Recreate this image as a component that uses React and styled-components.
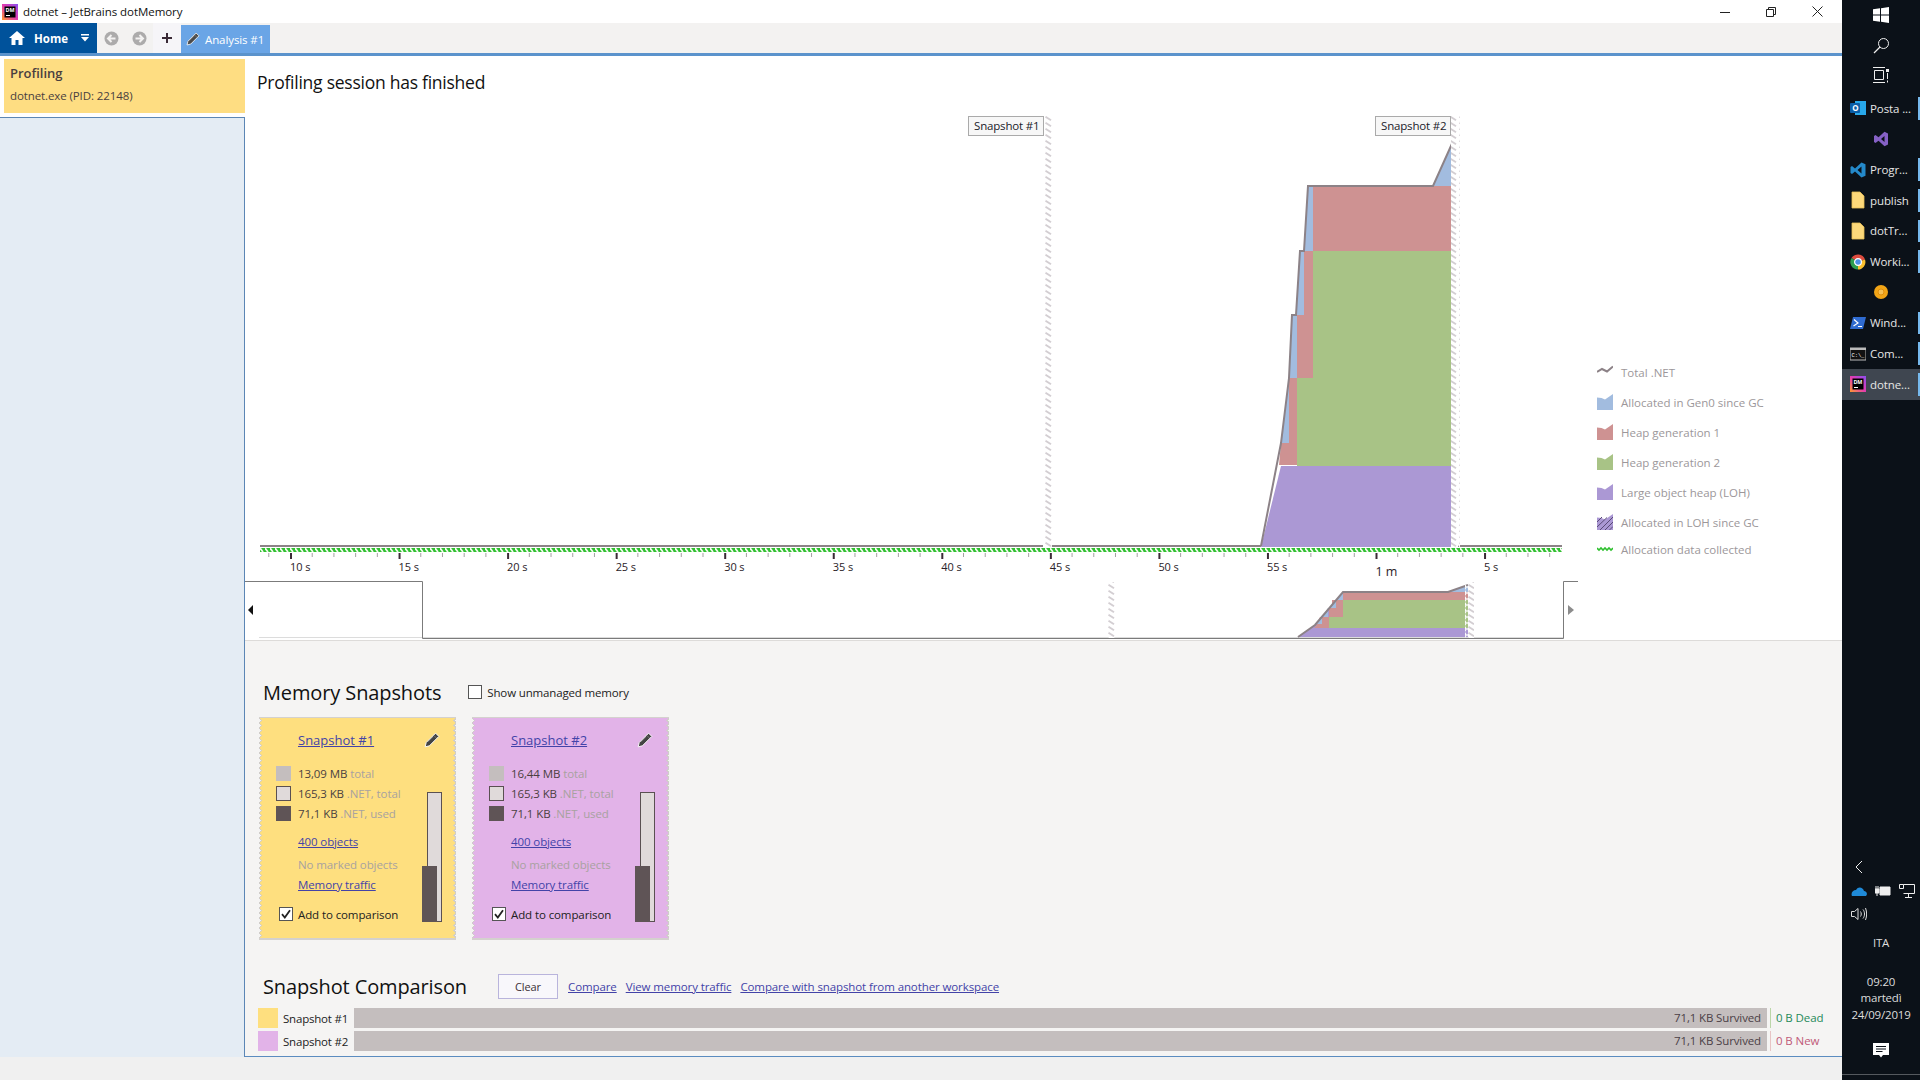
import React from 'react';
import styled, { createGlobalStyle } from 'styled-components';

const FONT = '"Open Sans", "Noto Sans", "Liberation Sans", sans-serif';

const Global = createGlobalStyle`
  html, body { margin: 0; padding: 0; height: 100%; overflow: hidden; background: #f0f0f0; }
  body { font-family: ${FONT}; font-size: 12px; }
  #root { height: 100%; }
`;

const Page = styled.div`display: flex; width: 1920px; height: 1080px;`;
const Window = styled.div`display: flex; flex-direction: column; width: 1842px; background: #f0f0f0;`;

const TitleBar = styled.div`display: flex; align-items: center; height: 23px; background: #fff; padding-left: 2px;`;
const TitleText = styled.span`margin-left: 5px; font-size: 11.5px; letter-spacing: -0.05px; color: #111;`;
const WinControls = styled.div`display: flex; margin-left: auto; padding-right: 2px;`;
const WinButton = styled.div`display: flex; width: 46px; height: 21px; align-items: center; justify-content: center;`;

const TabBar = styled.div`display: flex; height: 30px; background: #f3f2f1; border: 0;`;
const HomeButton = styled.div`display: flex; align-items: center; width: 97px; height: 30px; background: #00529b; color: #fff; padding-left: 9px; box-sizing: border-box; font-size: 11.5px; font-weight: 700;`;
const HomeLabel = styled.span`margin-left: 9px; width: 47px;`;
const NavGroup = styled.div`display: flex; align-items: center; width: 56px; padding-left: 7px; box-sizing: border-box; gap: 13px;`;
const PlusButton = styled.div`display: flex; align-items: center; justify-content: center; width: 28px; height: 30px; background: #f6f5f8;`;
const AnalysisTab = styled.div`display: flex; align-items: center; width: 89px; height: 28px; margin-top: 2px; background: #6aa5e6; color: #fff; padding-left: 5px; box-sizing: border-box; font-size: 11.5px; gap: 5px; letter-spacing: -0.1px;`;
const BlueRule = styled.div`height: 3px; background: #5b93cc;`;

const Body = styled.div`display: flex; flex: 1; min-height: 0;`;
const Sidebar = styled.aside`display: flex; flex-direction: column; width: 245px; background: #fff;`;
const SessionCard = styled.div`margin: 3px 0 0 4px; height: 54px; background: #fedd82; padding: 6px 0 0 6px; box-sizing: border-box; color: #4a3f3f;`;
const SessionName = styled.div`font-size: 13px; font-weight: 600; line-height: 17px;`;
const SessionSub = styled.div`font-size: 11.5px; line-height: 16px; margin-top: 6px; letter-spacing: -0.1px;`;
const SideList = styled.div`flex: 1; margin-top: 4px; background: #e4ecf4; border-top: 1px solid #5b86b5; border-right: 1px solid #5b86b5;`;

const Main = styled.main`display: flex; flex-direction: column; width: 1597px;`;
const ChartPane = styled.section`display: flex; flex-direction: column; height: 584px; background: #fff; border-bottom: 1px solid #dddbd9; box-sizing: content-box;`;
const PaneHeading = styled.h1`margin: 0; height: 44px; padding: 14px 0 0 12px; box-sizing: border-box; font-size: 17.5px; font-weight: 400; line-height: 24px; letter-spacing: -0.25px; color: #111;`;
const ChartRow = styled.div`display: flex; height: 540px;`;
const ChartSvg = styled.svg`display: block; width: 1333px; height: 540px; flex: none;`;
const Legend = styled.ul`list-style: none; margin: 0 0 0 19px; padding: 257px 0 0; display: flex; flex-direction: column;`;
const LegendRow = styled.li`display: flex; align-items: center; gap: 8px; height: 30px; color: #9c979a; font-size: 11.5px; letter-spacing: 0; &:last-child { margin-top: -3px; }`;

const Lower = styled.section`flex: 1; display: flex; flex-direction: column; background: #f5f4f3; border-bottom: 1px solid #5b8cc0; min-height: 0;`;
const SectionRow = styled.div`display: flex; align-items: center; height: 26px; padding-left: 18px; margin-top: 38px;`;
const SectionTitle = styled.h2`margin: 0; font-size: 20px; font-weight: 400; letter-spacing: -0.12px; color: #111;`;
const UnmanagedCheck = styled.label`display: flex; align-items: center; gap: 5px; margin-left: 27px; font-size: 11.5px; letter-spacing: -0.15px; color: #222;`;
const Box = styled.span`display: flex; align-items: center; justify-content: center; width: 14px; height: 14px; box-sizing: border-box; flex: none; background: #fff; border: 1px solid #555;`;
const Cards = styled.div`display: flex; gap: 16px; margin: 12px 0 0 14px;`;
const Card = styled.article`
  position: relative; display: flex; flex-direction: column; width: 197px; height: 223px; box-sizing: border-box;
  padding-top: 10px; background: ${p => p.$color};
  border-top: 1px solid #d4d1ce; border-bottom: 2px solid #d4d1ce;
  &::before, &::after {
    content: ''; position: absolute; top: 0; bottom: 0; width: 4px;
    background-size: 4px 5px; background-repeat: repeat-y;
  }
  &::before {
    left: 0;
    background-image:
      conic-gradient(from 225deg at 1.5px 50%, #f5f4f3 0 90deg, transparent 90deg),
      conic-gradient(from 225deg at 3px 50%, #d0cdca 0 90deg, transparent 90deg);
  }
  &::after {
    right: 0;
    background-image:
      conic-gradient(from 45deg at 2.5px 50%, #f5f4f3 0 90deg, transparent 90deg),
      conic-gradient(from 45deg at 1px 50%, #d0cdca 0 90deg, transparent 90deg);
  }
`;
const CardHead = styled.div`display: flex; align-items: center; justify-content: space-between; height: 24px; padding: 0 16px 0 39px;`;
const CardLink = styled.a`color: #4343a8; text-decoration: underline; font-size: ${p => p.$size || '11.5px'}; letter-spacing: ${p => p.$track ?? -0.1}px; line-height: 16px;`;
const CardBody = styled.div`display: flex; margin-top: 14px; flex: 1;`;
const InfoColumn = styled.div`display: flex; flex-direction: column; width: 168px; flex: none;`;
const MemRow = styled.div`display: flex; align-items: center; height: 15px; margin: 0 0 5px 17px; gap: 7px; font-size: 11.5px; letter-spacing: -0.1px; color: #4b3f3f; white-space: nowrap;`;
const Swatch = styled.span`width: 15px; height: 15px; flex: none; box-sizing: border-box; background: ${p => p.$color}; border: ${p => (p.$outlined ? '1px solid #5a5052' : '0')};`;
const Muted = styled.span`color: #a8a2a0;`;
const InfoLine = styled.div`margin: ${p => p.$top}px 0 0 39px; line-height: 16px; height: 16px; white-space: nowrap; display: flex;`;
const MutedLine = styled(InfoLine)`color: #a8a2a0; font-size: 11.5px; letter-spacing: -0.1px;`;
const CompareCheck = styled.label`display: flex; align-items: center; gap: 5px; height: 16px; margin: 13px 0 0 20px; font-size: 11.5px; letter-spacing: -0.1px; color: #222; white-space: nowrap;`;
const Gauge = styled.div`position: relative; width: 15px; height: 130px; box-sizing: border-box; margin: 26px 14px 0 0; margin-left: auto; background: #e0dada; border: 1px solid #5a5052;`;
const GaugeFill = styled.div`position: absolute; left: -6px; bottom: -1px; width: 15px; height: 56px; background: #5f5456;`;

const CompareHead = styled.div`display: flex; align-items: center; height: 25px; margin-top: 34px; padding-left: 18px;`;
const ClearButton = styled.button`width: 60px; height: 25px; margin-left: 31px; border: 1px solid #b9b4dc; background: #f8f7fb; font: 11px ${FONT}; letter-spacing: -0.1px; color: #3a3036;`;
const CompareLinks = styled.div`display: flex; gap: 9px; margin-left: 10px;`;
const CompareRows = styled.div`display: flex; flex-direction: column; gap: 3px; margin: 9px 0 0 13px;`;
const CompareRow = styled.div`display: grid; grid-template-columns: 20px 76px 1413px 75px; height: 20px; align-items: center;`;
const RowSwatch = styled.span`height: 20px; background: ${p => p.$color};`;
const RowLabel = styled.span`padding-left: 5px; font-size: 11.5px; letter-spacing: -0.2px; color: #222;`;
const RowBar = styled.div`height: 20px; line-height: 20px; background: #c4bebe; text-align: right; padding-right: 6px; font-size: 11.5px; letter-spacing: -0.13px; color: #4b3f46;`;
const RowDelta = styled.span`height: 20px; line-height: 20px; margin-left: 3px; padding-left: 5px; border-left: 1px solid ${p => p.$rule}; color: ${p => p.$color}; font-size: 11.5px; letter-spacing: -0.1px;`;
const StatusBar = styled.div`height: 23px; background: #f0f0f0; flex: none;`;

const Taskbar = styled.nav`display: flex; flex-direction: column; width: 78px; height: 1080px; background: #0b1118; color: #e6e6e6; flex: none;`;
const TaskGlyph = styled.div`display: flex; align-items: center; justify-content: center; height: 30px; flex: none;`;
const TaskList = styled.div`margin-top: 3px; display: flex; flex-direction: column;`;
const TaskItem = styled.div`
  position: relative; display: flex; align-items: center; height: 30.67px; box-sizing: border-box; padding-left: 8px; gap: 4px;
  justify-content: ${p => (p.$label ? 'flex-start' : 'center')}; ${p => !p.$label && 'padding-left: 0;'}
  background: ${p => (p.$active ? '#3f4650' : 'transparent')};
  font-size: 11.5px; letter-spacing: -0.1px; white-space: nowrap; overflow: hidden;
  &::after { content: ''; display: ${p => (p.$open ? 'block' : 'none')}; position: absolute; right: 0; top: 4px; bottom: 4px; width: 2px; background: #76b9ed; }
`;
const Tray = styled.div`margin-top: auto; display: flex; flex-direction: column; height: 225px; box-sizing: border-box; border-bottom: 5px solid #0b1118;`;
const TrayRow = styled.div`display: flex; align-items: center; height: 24px; padding-left: ${p => p.$pad || 9}px; gap: ${p => p.$gap || 0}px;`;
const TrayText = styled.div`text-align: center; font-size: 11.5px; letter-spacing: -0.2px; line-height: 16.5px; margin-top: ${p => p.$top}px; color: #ddd;`;
const TrayBottom = styled.div`display: flex; justify-content: center; margin-top: 16px; height: 24px; align-items: center;`;
const TrayRule = styled.div`height: 1px; background: #55595e; margin-top: 11px;`;

const ChartText = styled.text`font-family: ${FONT}; font-size: ${p => p.$size || 11}px; fill: #2a2228; letter-spacing: -0.1px;`;
const SnapText = styled.text`font-family: ${FONT}; font-size: 11.5px; fill: #1a1a2a; letter-spacing: -0.17px;`;

const DmLogo = ({ s = 16 }) => (
  <svg width={s} height={s} viewBox="0 0 16 16">
    <defs><linearGradient id="dmg" x1="0" y1="1" x2="1" y2="0"><stop offset="0" stopColor="#ff9a2e" /><stop offset=".5" stopColor="#e33bb0" /><stop offset="1" stopColor="#8a4ff0" /></linearGradient></defs>
    <rect width="16" height="16" fill="url(#dmg)" />
    <rect x="2.500" y="2.500" width="11" height="11" fill="#000" />
    <text x="3.400" y="8" fontFamily={FONT} fontSize="5.400" fontWeight="700" fill="#fff">DM</text>
    <rect x="4" y="11" width="4" height="1" fill="#fff" />
  </svg>
);
const Pencil = ({ fill = '#444', s = 16 }) => (
  <svg width={s} height={s} viewBox="0 0 16 16"><path d="M11.600 1.200 14.800 4.400 5.400 13.800 1.200 14.800 2.200 10.600Z" fill={fill} stroke="#fff" strokeWidth=".9" /><path d="M10 3.600 12.400 6M4 9.800 9 4.800" stroke="#888" strokeWidth=".7" /></svg>
);
const NavCircle = ({ dir }) => (
  <svg width="15" height="15" viewBox="0 0 15 15"><circle cx="7.500" cy="7.500" r="7" fill="#acabab" /><path d={dir < 0 ? 'M11.500 7.500H4.500M7.500 4 4 7.500 7.500 11' : 'M3.500 7.500H10.500M7.500 4 11 7.500 7.500 11'} fill="none" stroke="#f3f2f1" strokeWidth="2" /></svg>
);
const Check = () => (
  <svg width="12" height="12" viewBox="0 0 12 12"><path d="M2 6.200 4.800 9.500 10 2.200" fill="none" stroke="#222" strokeWidth="1.800" /></svg>
);
const Mountain = ({ color, hatch }) => (
  <svg width="16" height="16" viewBox="0 0 16 16">
    <path d="M0 16V3.500L4.500 4 8 5.500 16 0V16Z" fill={color} />
    {hatch && <path d="M0 8 5 3M0 13 10 3.500M3 16 16 3M8 16 16 8M12.500 16 16 12.500" stroke="#5a4a78" strokeWidth="1" />}
  </svg>
);

const Strip = ({ x, y, h }) => <rect x={x} y={y} width="9" height={h} fill="url(#zig)" />;

const ticks = [];
for (let i = -1; i <= 58; i++) ticks.push({ x: 290 + i * 21.71, major: ((i % 5) + 5) % 5 === 0 });
const labels = ['10 s', '15 s', '20 s', '25 s', '30 s', '35 s', '40 s', '45 s', '50 s', '55 s', '1 m', '5 s'];

const Chart = () => (
  <ChartSvg viewBox="245 100 1333 540">
    <defs>
      <pattern id="zig" width="9" height="6" patternUnits="userSpaceOnUse" x="0" y="116">
        <path d="M2 0 0 3 2 6H7L9 3 7 0Z" fill="#fff" />
        <path d="M1.500 .8 7 4.200M.5 6.500 2 7.500" stroke="#d3ced2" strokeWidth="1.900" />
      </pattern>
      <pattern id="grn" width="5" height="4" patternUnits="userSpaceOnUse" x="260" y="548">
        <rect width="5" height="4" fill="#2fc02f" />
        <path d="M0 0 3 4" stroke="#f2faf0" strokeWidth="1.700" />
      </pattern>
    </defs>

    <path d="M260 546H1043M1050 546H1261M1458 546H1562" stroke="#8c8287" strokeWidth="2" fill="none" />
    <rect x="260" y="548" width="1302" height="4" fill="url(#grn)" />
    {ticks.map(t => <rect key={t.x} x={t.x} y="553" width={t.major ? 2 : 1} height={t.major ? 6 : 4} fill={t.major ? '#3b2a36' : '#a5a0a3'} />)}
    {labels.map((l, i) => (
      <ChartText key={l + i} x={290 + i * 108.55} y={l === '1 m' ? 576 : 571} $size={l === '1 m' ? 12.5 : 11}>{l}</ChartText>
    ))}

    <path d="M1261 547 1281 466H1455V547Z" fill="#ab98d4" />
    <path d="M1297 465V378H1313V251H1455V466H1297Z" fill="#a8c386" />
    <path d="M1313 186H1455V251H1313ZM1304 251H1313V315H1304ZM1297 315H1313V378H1297ZM1281 443H1289V378H1297V465H1279Z" fill="#ce9292" />
    <path d="M1308 186H1313V251H1304ZM1300 251H1304V315H1296ZM1292 315H1297V378H1289ZM1285 410 1289 378V443H1281ZM1433 186 1455 137V186Z" fill="#a2bcdf" />
    <path d="M1261 546 1281 443 1289 378 1292 315H1296L1300 251H1304L1308 186H1433L1455 137" fill="none" stroke="#8c8287" strokeWidth="2" />

    <Strip x={1043} y={116} h={432} />
    <Strip x={1451} y={116} h={432} />
    <rect x="968.500" y="116.500" width="75" height="19" fill="#f7f7f7" stroke="#aaa" />
    <SnapText x="974" y="130">Snapshot #1</SnapText>
    <rect x="1375.500" y="116.500" width="75" height="19" fill="#f7f7f7" stroke="#aaa" />
    <SnapText x="1381" y="130">Snapshot #2</SnapText>

    <path d="M259 637.500H1563" stroke="#dcdcdc" />
    <path d="M1298 637 1315 625 1343 592H1468V637Z" fill="#ab98d4" />
    <path d="M1329 628V617H1343V600H1468V628Z" fill="#a8c386" />
    <path d="M1343 592H1468V600H1343ZM1332 600H1343V617H1329V608H1332ZM1316 626 1320 617H1329V628H1314Z" fill="#ce9292" />
    <path d="M1338 598 1343 592V600H1336ZM1330 608 1336 600V608ZM1322 617 1328 608V617ZM1316 624 1322 617V624ZM1448 592 1468 585V592Z" fill="#a2bcdf" />
    <path d="M1298 637 1315 625 1343 592H1448L1468 585" fill="none" stroke="#8c8287" strokeWidth="2" />
    <Strip x={1107} y={582} h={56} />
    <Strip x={1465} y={582} h={56} />

    <path d="M245 581.500H422.500V638.500H1563.500V581.500H1578" fill="none" stroke="#7b7b7b" />
    <path d="M253 605V615L248 610Z" fill="#111" />
    <path d="M1568 605V615L1574 610Z" fill="#8c8c8c" />
  </ChartSvg>
);

const legend = [
  ['Total .NET', <svg key="a" width="16" height="16" viewBox="0 0 16 16"><path d="M0 8 5 5 10 7.500 16 2.500" fill="none" stroke="#8c8287" strokeWidth="2" /></svg>],
  ['Allocated in Gen0 since GC', <Mountain key="b" color="#a2bcdf" />],
  ['Heap generation 1', <Mountain key="c" color="#ce9292" />],
  ['Heap generation 2', <Mountain key="d" color="#a8c386" />],
  ['Large object heap (LOH)', <Mountain key="e" color="#ab98d4" />],
  ['Allocated in LOH since GC', <Mountain key="f" color="#ab98d4" hatch />],
  ['Allocation data collected', <svg key="g" width="16" height="16" viewBox="0 0 16 16"><path d="M0 7 2 9 4 7 6 9 8 7 10 9 12 7 14 9 16 7" fill="none" stroke="#2fc02f" strokeWidth="1.600" /></svg>],
];

const SnapshotCard = ({ name, color, total }) => (
  <Card $color={color}>
    <CardHead>
      <CardLink $size="13px" $track={0}>{name}</CardLink>
      <Pencil />
    </CardHead>
    <CardBody>
      <InfoColumn>
        <MemRow><Swatch $color="#c4bebe" /><span>{total} <Muted>total</Muted></span></MemRow>
        <MemRow><Swatch $color="#e0dada" $outlined /><span>165,3 KB <Muted>.NET, total</Muted></span></MemRow>
        <MemRow><Swatch $color="#5f5456" /><span>71,1 KB <Muted>.NET, used</Muted></span></MemRow>
        <InfoLine $top={8}><CardLink>400 objects</CardLink></InfoLine>
        <MutedLine $top={7}>No marked objects</MutedLine>
        <InfoLine $top={4}><CardLink>Memory traffic</CardLink></InfoLine>
        <CompareCheck><Box><Check /></Box>Add to comparison</CompareCheck>
      </InfoColumn>
      <Gauge><GaugeFill /></Gauge>
    </CardBody>
  </Card>
);

const Doc = () => <svg width="16" height="18" viewBox="0 0 16 18"><path d="M2 1H10L14 5V17H2Z" fill="#fcd87a" stroke="#e8bf55" strokeWidth=".8" /></svg>;
const taskItems = [
  { label: 'Posta ...', open: true, icon: <svg width="16" height="16" viewBox="0 0 16 16"><rect x="5" y="1" width="11" height="14" fill="#28a8ea" /><rect y="3" width="10" height="10" rx="1" fill="#0a5ea8" /><text x="2.300" y="11" fontFamily={FONT} fontSize="8" fontWeight="700" fill="#fff">O</text></svg> },
  { icon: <svg width="16" height="16" viewBox="0 0 16 16"><path fillRule="evenodd" d="M11.500 .8 15 2.500V13.500L11.500 15.200 5.500 9.700 2.500 12 1 11V5L2.500 4 5.500 6.300ZM11.500 5 8 8 11.500 11Z" fill="#8661c5" /></svg> },
  { label: 'Progr...', open: true, icon: <svg width="16" height="16" viewBox="0 0 16 16"><path fillRule="evenodd" d="M11.500 .5 15.500 2.300V13.700L11.500 15.500 5 9.600 2 12 .5 11V5L2 4 5 6.400ZM11.500 4.500 7.500 8 11.500 11.500Z" fill="#2489ca" /></svg> },
  { label: 'publish', open: true, icon: <Doc /> },
  { label: 'dotTr...', open: true, icon: <Doc /> },
  { label: 'Worki...', open: true, icon: <svg width="16" height="16" viewBox="0 0 16 16"><path d="M8 8 1.500 4A7.500 7.500 0 0 1 15 5.500Z" fill="#dd4b3e" /><path d="M8 8 15 5.500A7.500 7.500 0 0 1 8 15.500Z" fill="#fbc02d" /><path d="M8 8V15.500A7.500 7.500 0 0 1 1.500 4Z" fill="#2e9e4f" /><circle cx="8" cy="8" r="3.400" fill="#4a90e2" stroke="#fff" strokeWidth="1.200" /></svg> },
  { icon: <svg width="16" height="16" viewBox="0 0 16 16"><circle cx="8" cy="8" r="7" fill="#f2a516" /><circle cx="8" cy="8" r="3" fill="#f6c053" stroke="#e08e0b" /></svg> },
  { label: 'Wind...', open: true, icon: <svg width="16" height="16" viewBox="0 0 16 16"><path d="M3 2H16L13 14H0Z" fill="#2f6bd0" /><path d="M4 4.500 8 8 3.500 11M8 11.500H12" fill="none" stroke="#fff" strokeWidth="1.200" /></svg> },
  { label: 'Com...', open: true, icon: <svg width="16" height="16" viewBox="0 0 16 16"><rect y="2" width="16" height="12" fill="#111" stroke="#bbb" /><rect y="2" width="16" height="2" fill="#bbb" /><text x="1.500" y="11" fontFamily="Liberation Mono, monospace" fontSize="5.500" fill="#fff">C:\_</text></svg> },
  { label: 'dotne...', open: true, active: true, icon: <DmLogo /> },
];

export default function App() {
  return (
    <Page>
      <Global />
      <Window>
        <TitleBar>
          <DmLogo />
          <TitleText>dotnet – JetBrains dotMemory</TitleText>
          <WinControls>
            <WinButton><svg width="10" height="10" viewBox="0 0 10 10"><path d="M0 5.500H10" stroke="#222" /></svg></WinButton>
            <WinButton><svg width="10" height="10" viewBox="0 0 10 10"><path d="M.5 2.500H7.500V9.500H.5ZM2.500 2.500V.5H9.500V7.500H7.500" fill="none" stroke="#222" /></svg></WinButton>
            <WinButton><svg width="11" height="11" viewBox="0 0 11 11"><path d="M.5 .5 10.500 10.500M10.500 .5 .5 10.500" stroke="#222" /></svg></WinButton>
          </WinControls>
        </TitleBar>
        <TabBar>
          <HomeButton>
            <svg width="16" height="14" viewBox="0 0 16 14"><path d="M8 0 16 7H13.500V14H9.500V9H6.500V14H2.500V7H0Z" fill="#fff" /></svg>
            <HomeLabel>Home</HomeLabel>
            <svg width="8" height="8" viewBox="0 0 8 8"><path d="M0 0H8V1.500H0ZM0 3H8L4 7.500Z" fill="#fff" /></svg>
          </HomeButton>
          <NavGroup><NavCircle dir={-1} /><NavCircle dir={1} /></NavGroup>
          <PlusButton><svg width="12" height="12" viewBox="0 0 12 12"><path d="M6 1V11M1 6H11" stroke="#3a2a36" strokeWidth="2" /></svg></PlusButton>
          <AnalysisTab><Pencil fill="#4a4a4a" s={14} />Analysis #1</AnalysisTab>
        </TabBar>
        <BlueRule />
        <Body>
          <Sidebar>
            <SessionCard>
              <SessionName>Profiling</SessionName>
              <SessionSub>dotnet.exe (PID: 22148)</SessionSub>
            </SessionCard>
            <SideList />
          </Sidebar>
          <Main>
            <ChartPane>
              <PaneHeading>Profiling session has finished</PaneHeading>
              <ChartRow>
                <Chart />
                <Legend>
                  {legend.map(([t, icon]) => <LegendRow key={t}>{icon}{t}</LegendRow>)}
                </Legend>
              </ChartRow>
            </ChartPane>
            <Lower>
              <SectionRow>
                <SectionTitle>Memory Snapshots</SectionTitle>
                <UnmanagedCheck><Box />Show unmanaged memory</UnmanagedCheck>
              </SectionRow>
              <Cards>
                <SnapshotCard name="Snapshot #1" color="#fedf7f" total="13,09 MB" />
                <SnapshotCard name="Snapshot #2" color="#e2b3e8" total="16,44 MB" />
              </Cards>
              <CompareHead>
                <SectionTitle>Snapshot Comparison</SectionTitle>
                <ClearButton>Clear</ClearButton>
                <CompareLinks>
                  <CardLink>Compare</CardLink>
                  <CardLink>View memory traffic</CardLink>
                  <CardLink>Compare with snapshot from another workspace</CardLink>
                </CompareLinks>
              </CompareHead>
              <CompareRows>
                <CompareRow>
                  <RowSwatch $color="#fedf7f" /><RowLabel>Snapshot #1</RowLabel>
                  <RowBar>71,1 KB Survived</RowBar>
                  <RowDelta $rule="#bcd6a8" $color="#1f8a5a">0 B Dead</RowDelta>
                </CompareRow>
                <CompareRow>
                  <RowSwatch $color="#e2b3e8" /><RowLabel>Snapshot #2</RowLabel>
                  <RowBar>71,1 KB Survived</RowBar>
                  <RowDelta $rule="#e8c4c4" $color="#c05a78">0 B New</RowDelta>
                </CompareRow>
              </CompareRows>
            </Lower>
          </Main>
        </Body>
        <StatusBar />
      </Window>
      <Taskbar>
        <TaskGlyph><svg width="16" height="16" viewBox="0 0 16 16"><path d="M0 2.300 7 1.300V7.500H0ZM8 1.200 16 0V7.500H8ZM0 8.500H7V14.700L0 13.700ZM8 8.500H16V16L8 14.800Z" fill="#fff" /></svg></TaskGlyph>
        <TaskGlyph><svg width="17" height="17" viewBox="0 0 17 17"><circle cx="10.500" cy="6.500" r="5" fill="none" stroke="#eee" /><path d="M7 10 1 16" stroke="#eee" strokeWidth="1.200" /></svg></TaskGlyph>
        <TaskGlyph><svg width="16" height="16" viewBox="0 0 16 16"><path d="M0 .5H12M0 15.500H12M1.500 3.500H10.500V12.500H1.500ZM14.500 6V12M14.500 13.500V15.500" fill="none" stroke="#eee" /><rect x="13" y="2" width="3" height="3" fill="#eee" /></svg></TaskGlyph>
        <TaskList>
          {taskItems.map((t, i) => (
            <TaskItem key={i} $label={!!t.label} $open={t.open} $active={t.active}>{t.icon}{t.label}</TaskItem>
          ))}
        </TaskList>
        <Tray>
          <TrayRow $pad={12}><svg width="10" height="14" viewBox="0 0 10 14"><path d="M8 1 2 7 8 13" fill="none" stroke="#eee" /></svg></TrayRow>
          <TrayRow $pad={9} $gap={8}>
            <svg width="16" height="10" viewBox="0 0 16 10"><path d="M1 10H15C17 8 15.500 5 13 5 12 1 7 0 5 4 2 4 -.5 7 1 10Z" fill="#1f8ad8" /></svg>
            <svg width="16" height="12" viewBox="0 0 16 12"><path d="M5 2H15V10H5ZM0 4H4V8H0ZM1 1V4M3 1V4M2 8V11" fill="#eee" stroke="#eee" /></svg>
            <svg width="16" height="14" viewBox="0 0 16 14"><path d="M4.500 .5H15.500V9.500H4.500M.5 .5H4.500V4.500H.5ZM9.500 9.500V13M6 13.500H13" fill="none" stroke="#eee" /></svg>
          </TrayRow>
          <TrayRow $pad={9}><svg width="16" height="14" viewBox="0 0 16 14"><path d="M.5 4.500H3.500L7 1.500V12.500L3.500 9.500H.5ZM9.500 4.500C10.500 6 10.500 8 9.500 9.500M12 2.500C14 5 14 9 12 11.500M14.500 1C16 5 16 9 14.500 13" fill="none" stroke="#ddd" /></svg></TrayRow>
          <TrayText $top={9}>ITA</TrayText>
          <TrayText $top={22}>09:20<br />martedì<br />24/09/2019</TrayText>
          <TrayBottom><svg width="16" height="16" viewBox="0 0 16 16"><path d="M0 0H16V12H10L8 14.500 6 12H0Z" fill="#fff" /><path d="M3 3.500H13M3 6H13M3 8.500H9.500" stroke="#0b1118" /></svg></TrayBottom>
          <TrayRule />
        </Tray>
      </Taskbar>
    </Page>
  );
}
